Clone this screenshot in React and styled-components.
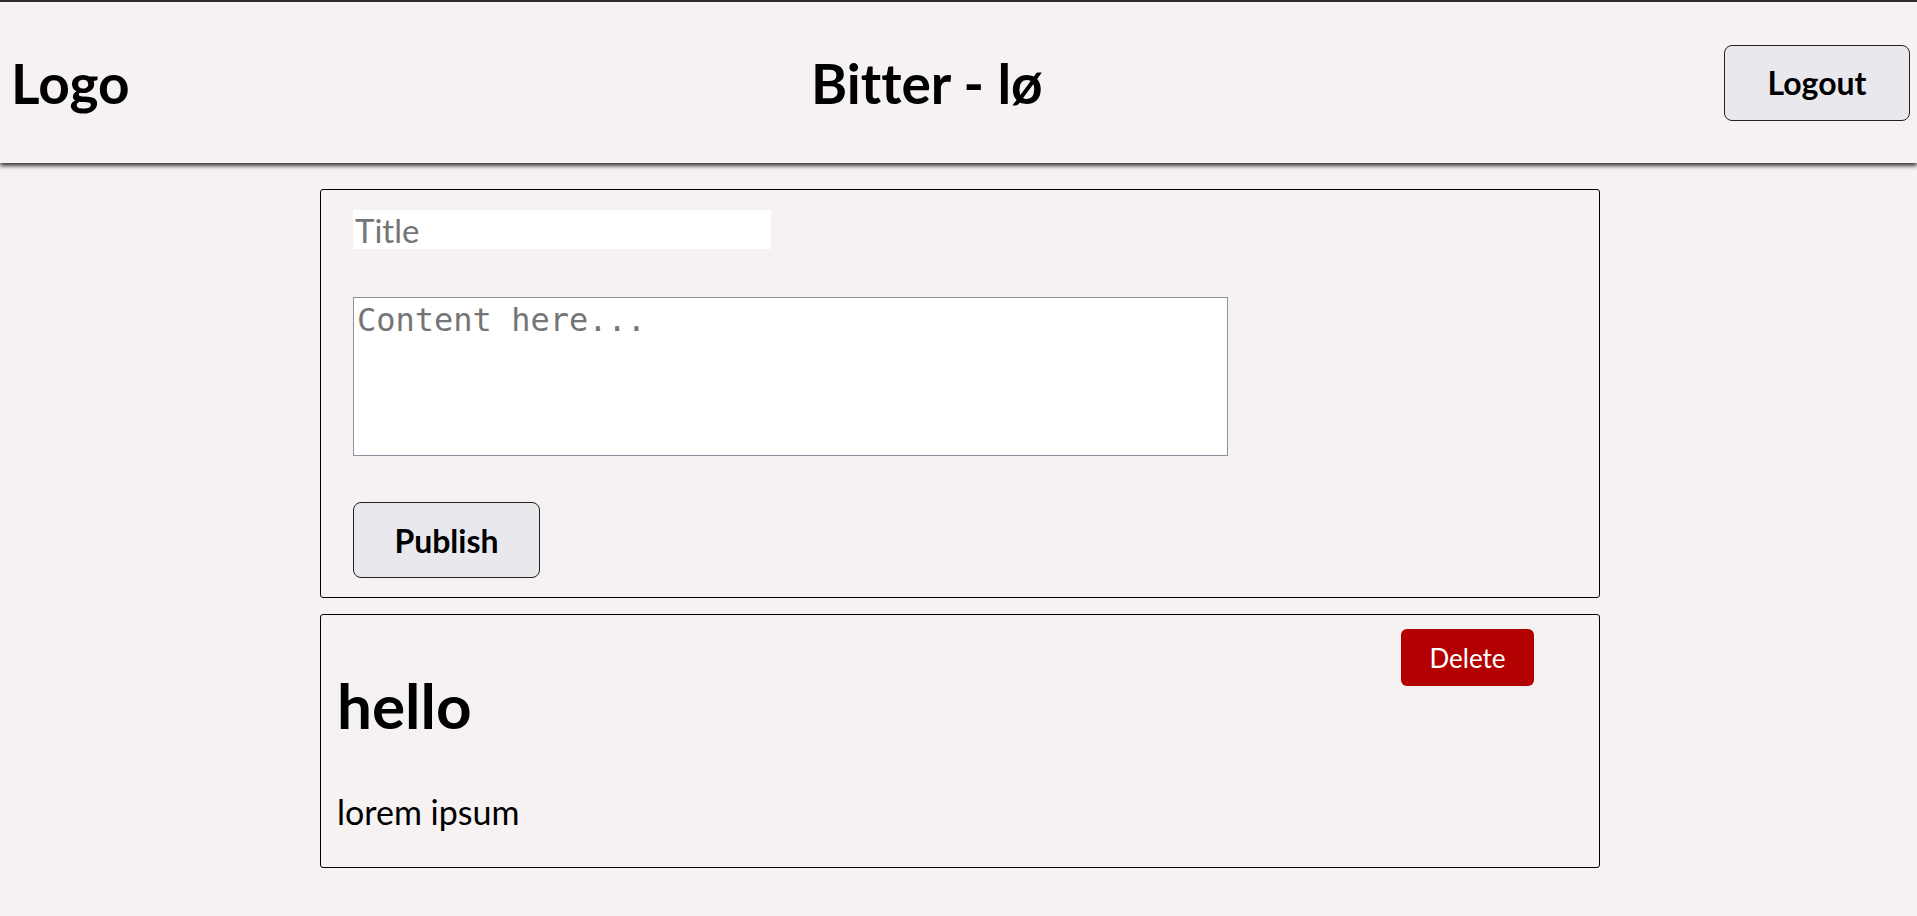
import React from 'react';
import styled, { createGlobalStyle } from 'styled-components';

const GlobalStyle = createGlobalStyle`
  html, body {
    margin: 0;
    padding: 0;
    background: #f5f2f1;
    font-family: Lato, "Open Sans", sans-serif;
    font-variant-ligatures: none;
    color: #000;
  }
`;

const Header = styled.header`
  display: flex;
  justify-content: space-between;
  align-items: center;
  height: 161px;
  padding: 0 7px 0 11px;
  border-top: 2px solid #2c2c2c;
  background: #f5f2f1;
  box-shadow: 0 3px 4px rgba(0, 0, 0, 0.75);
`;

const HeaderTitle = styled.h1`
  margin: 0;
  font-size: 55px;
  font-weight: 700;
  line-height: 66px;
`;

const Button = styled.button`
  width: ${props => props.wide || 186}px;
  height: 76px;
  border: 1px solid #222;
  border-radius: 8px;
  background: #e9e9ed;
  font-family: Lato, "Open Sans", sans-serif;
  font-size: 32px;
  font-weight: 700;
  color: #000;
  cursor: pointer;
`;

const Main = styled.main`
  display: flex;
  flex-direction: column;
  align-items: center;
  gap: 16px;
  padding: 26px 0 0 3px;
`;

const Card = styled.section`
  box-sizing: border-box;
  width: 1280px;
  border: 1px solid #000;
  border-radius: 3px;
`;

const Form = styled(Card)`
  display: flex;
  flex-direction: column;
  align-items: flex-start;
  padding: 20px 32px 19px;
`;

const TitleInput = styled.input`
  box-sizing: border-box;
  width: 418px;
  height: 39px;
  padding: 0 2px;
  border: none;
  outline: none;
  background: #fff;
  font-family: Lato, "Open Sans", sans-serif;
  font-size: 33px;
  &::placeholder { color: #757575; }
`;

const ContentArea = styled.textarea`
  box-sizing: border-box;
  width: 875px;
  height: 159px;
  margin: 48px 0 46px;
  padding: 3px 3px;
  border: 1px solid #8f8f9d;
  background: #fff;
  resize: none;
  font-family: "DejaVu Sans Mono", monospace;
  font-size: 32px;
  &::placeholder { color: #757575; }
`;

const Post = styled(Card)`
  padding: 14px 65px 35px 16px;
`;

const PostHead = styled.div`
  display: flex;
  justify-content: space-between;
  align-items: flex-start;
`;

const PostTitle = styled.h2`
  margin: 40px 0 0;
  font-size: 62px;
  font-weight: 700;
  line-height: 72px;
`;

const DeleteButton = styled.button`
  width: 133px;
  height: 57px;
  border: none;
  border-radius: 6px;
  background: #b30000;
  color: #fff;
  font-family: Lato, "Open Sans", sans-serif;
  font-size: 26px;
  cursor: pointer;
`;

const PostBody = styled.p`
  margin: 51px 0 0;
  font-size: 34px;
  line-height: 40px;
`;

const posts = [{ title: 'hello', body: 'lorem ipsum' }];

export default function App() {
  return (
    <>
      <GlobalStyle />
      <Header>
        <HeaderTitle>Logo</HeaderTitle>
        <HeaderTitle>Bitter - lø</HeaderTitle>
        <Button>Logout</Button>
      </Header>
      <Main>
        <Form as="form" onSubmit={e => e.preventDefault()}>
          <TitleInput placeholder="Title" />
          <ContentArea placeholder="Content here..." />
          <Button wide={187}>Publish</Button>
        </Form>
        {posts.map((post, i) => (
          <Post key={i}>
            <PostHead>
              <PostTitle>{post.title}</PostTitle>
              <DeleteButton>Delete</DeleteButton>
            </PostHead>
            <PostBody>{post.body}</PostBody>
          </Post>
        ))}
      </Main>
    </>
  );
}
